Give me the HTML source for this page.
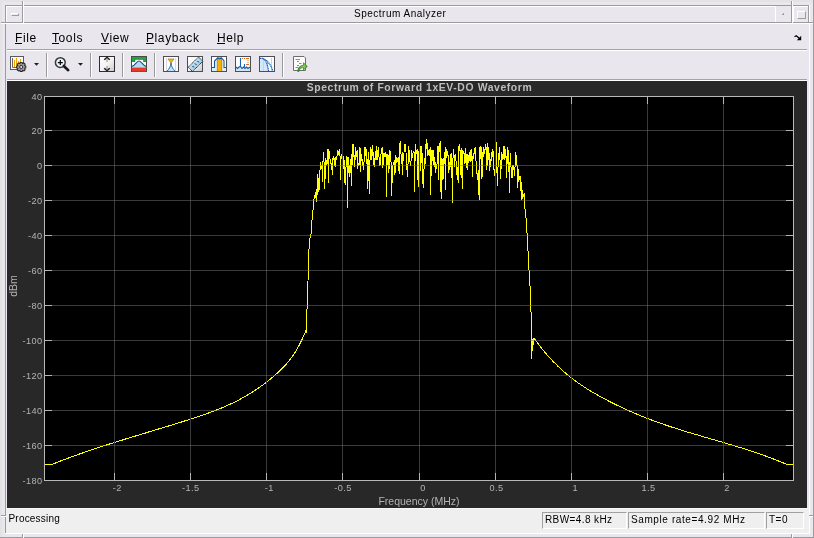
<!DOCTYPE html>
<html><head><meta charset="utf-8"><style>
*{margin:0;padding:0;box-sizing:border-box}
html,body{width:814px;height:538px;overflow:hidden;background:#e8e8e8;font-family:"Liberation Sans",sans-serif}
.a{position:absolute}
svg{will-change:transform}
.g{stroke:#3a3a3a;stroke-width:1}
.gh{stroke:#767676;stroke-opacity:0.5;stroke-width:1}
.t{stroke:#b4b4b4;stroke-width:1}
text{font-family:"Liberation Sans",sans-serif}
.lb{font-size:9.2px;fill:#b4b4b4;letter-spacing:0.4px}
.ttl{font-size:10.4px;font-weight:bold;fill:#bebebe;letter-spacing:0.6px}
.xl{font-size:10.5px;fill:#b4b4b4}
.tt{font-size:10px;fill:#000;letter-spacing:0.5px}
.mn{font-size:12px;fill:#000;letter-spacing:0.6px}
.sb{font-size:10px;fill:#000}
</style></head><body>
<div class="a" style="left:0px;top:0px;width:814px;height:538px;background:#e9e7ed"></div>
<div class="a" style="left:6px;top:6px;width:803px;height:527px;background:#e9e7ed"></div>
<div class="a" style="left:0px;top:0px;width:814px;height:2px;background:#e3e3e3"></div>
<div class="a" style="left:0px;top:0px;width:2px;height:538px;background:#e3e3e3"></div>
<div class="a" style="left:813px;top:0px;width:1px;height:538px;background:#9c9c9c"></div>
<div class="a" style="left:0px;top:537px;width:814px;height:1px;background:#9c9c9c"></div>
<div class="a" style="left:5px;top:5px;width:804px;height:1px;background:#9c9c9c"></div>
<div class="a" style="left:5px;top:5px;width:1px;height:529px;background:#9c9c9c"></div>
<div class="a" style="left:809px;top:5px;width:1px;height:529px;background:#ffffff"></div>
<div class="a" style="left:5px;top:533px;width:805px;height:1px;background:#ffffff"></div>
<div class="a" style="left:6px;top:22px;width:803px;height:1px;background:#9c9c9c"></div>
<div class="a" style="left:6px;top:23px;width:803px;height:1px;background:#ffffff"></div>
<div class="a" style="left:22px;top:1px;width:1px;height:22px;background:#9c9c9c"></div>
<div class="a" style="left:23px;top:1px;width:1px;height:22px;background:#ffffff"></div>
<div class="a" style="left:791px;top:1px;width:1px;height:22px;background:#9c9c9c"></div>
<div class="a" style="left:792px;top:1px;width:1px;height:22px;background:#ffffff"></div>
<div class="a" style="left:6px;top:6px;width:16px;height:1px;background:#ffffff"></div>
<div class="a" style="left:6px;top:6px;width:1px;height:16px;background:#ffffff"></div>
<div class="a" style="left:808px;top:6px;width:1px;height:16px;background:#9c9c9c"></div>
<div class="a" style="left:793px;top:6px;width:15px;height:1px;background:#ffffff"></div>
<div class="a" style="left:793px;top:6px;width:1px;height:16px;background:#ffffff"></div>
<div class="a" style="left:775px;top:6px;width:1px;height:16px;background:#ffffff"></div>
<div class="a" style="left:24px;top:6px;width:751px;height:1px;background:#ffffff"></div>
<div class="a" style="left:1px;top:22px;width:5px;height:1px;background:#9c9c9c"></div>
<div class="a" style="left:1px;top:23px;width:5px;height:1px;background:#ffffff"></div>
<div class="a" style="left:809px;top:22px;width:4px;height:1px;background:#9c9c9c"></div>
<div class="a" style="left:809px;top:23px;width:4px;height:1px;background:#ffffff"></div>
<div class="a" style="left:1px;top:515px;width:5px;height:1px;background:#9c9c9c"></div>
<div class="a" style="left:1px;top:516px;width:5px;height:1px;background:#ffffff"></div>
<div class="a" style="left:809px;top:515px;width:4px;height:1px;background:#9c9c9c"></div>
<div class="a" style="left:809px;top:516px;width:4px;height:1px;background:#ffffff"></div>
<div class="a" style="left:22px;top:534px;width:1px;height:4px;background:#9c9c9c"></div>
<div class="a" style="left:23px;top:534px;width:1px;height:4px;background:#ffffff"></div>
<div class="a" style="left:791px;top:534px;width:1px;height:4px;background:#9c9c9c"></div>
<div class="a" style="left:792px;top:534px;width:1px;height:4px;background:#ffffff"></div>
<div class="a" style="left:11px;top:13px;width:8px;height:3px;border-top:1px solid #fff;border-left:1px solid #fff;border-bottom:1px solid #9c9c9c;border-right:1px solid #9c9c9c"></div>
<div class="a" style="left:797px;top:11px;width:9px;height:8px;border-top:1px solid #fff;border-left:1px solid #fff;border-bottom:1px solid #9c9c9c;border-right:1px solid #9c9c9c"></div>
<div class="a" style="left:782px;top:13px;width:2px;height:2px;border-bottom:1px solid #9c9c9c;border-right:1px solid #9c9c9c"></div>
<div class="a" style="left:7px;top:49px;width:800px;height:1px;background:#a4a4a4"></div>
<div class="a" style="left:7px;top:50px;width:800px;height:1px;background:#ffffff"></div>
<div class="a" style="left:7px;top:79px;width:800px;height:1px;background:#a4a4a4"></div>
<div class="a" style="left:7px;top:80px;width:800px;height:1px;background:#ffffff"></div>
<div class="a" style="left:46px;top:53px;width:1px;height:24px;background:#9a9a9a"></div>
<div class="a" style="left:47px;top:53px;width:1px;height:24px;background:#ffffff"></div>
<div class="a" style="left:90px;top:53px;width:1px;height:24px;background:#9a9a9a"></div>
<div class="a" style="left:91px;top:53px;width:1px;height:24px;background:#ffffff"></div>
<div class="a" style="left:122px;top:53px;width:1px;height:24px;background:#9a9a9a"></div>
<div class="a" style="left:123px;top:53px;width:1px;height:24px;background:#ffffff"></div>
<div class="a" style="left:154px;top:53px;width:1px;height:24px;background:#9a9a9a"></div>
<div class="a" style="left:155px;top:53px;width:1px;height:24px;background:#ffffff"></div>
<div class="a" style="left:282px;top:53px;width:1px;height:24px;background:#9a9a9a"></div>
<div class="a" style="left:283px;top:53px;width:1px;height:24px;background:#ffffff"></div>
<div class="a" style="left:7px;top:81px;width:800px;height:427px;background:#282828"></div>
<div class="a" style="left:6px;top:508px;width:803px;height:25px;background:#efefef"></div>
<div class="a" style="left:6px;top:508px;width:803px;height:1px;background:#f8f8f8"></div>
<div class="a" style="left:542px;top:512px;width:85px;height:17px;border-top:1px solid #a0a0a0;border-left:1px solid #a0a0a0;border-right:1px solid #fff;border-bottom:1px solid #fff"></div>
<div class="a" style="left:628px;top:512px;width:137px;height:17px;border-top:1px solid #a0a0a0;border-left:1px solid #a0a0a0;border-right:1px solid #fff;border-bottom:1px solid #fff"></div>
<div class="a" style="left:766px;top:512px;width:38px;height:17px;border-top:1px solid #a0a0a0;border-left:1px solid #a0a0a0;border-right:1px solid #fff;border-bottom:1px solid #fff"></div>
<svg width="320" height="30" viewBox="0 50 320 30" style="position:absolute;left:0;top:50px">
<defs>
<linearGradient id="gw" x1="0" y1="0" x2="1" y2="1"><stop offset="0" stop-color="#ffffff"/><stop offset="0.5" stop-color="#f4f4f4"/><stop offset="1" stop-color="#c8c8c8"/></linearGradient>
<linearGradient id="gb" x1="0" y1="0" x2="1" y2="1"><stop offset="0" stop-color="#e4f4fc"/><stop offset="1" stop-color="#7ab8e0"/></linearGradient>
<linearGradient id="gg" x1="0" y1="0" x2="1" y2="0"><stop offset="0" stop-color="#2f8f1f"/><stop offset="0.6" stop-color="#9ad860"/><stop offset="1" stop-color="#3c9c28"/></linearGradient>
</defs>
<!-- icon1: chart + gear -->
<rect x="10.5" y="56.5" width="13" height="13" fill="#fafafa" stroke="#5a5a5a"/>
<path d="M12.5 58 V67.5 H22" fill="none" stroke="#6a6a6a"/>
<path d="M14.5 67 V60 M16.5 67 V58 M18.5 67 V61 M20.5 67 V59" stroke="#f5a000" stroke-width="1"/>
<g transform="translate(21.2,67) scale(0.92)">
<path d="M-1,-5 L1,-5 L1.4,-3.7 L3,-4.3 L4.3,-3 L3.7,-1.4 L5,-1 L5,1 L3.7,1.4 L4.3,3 L3,4.3 L1.4,3.7 L1,5 L-1,5 L-1.4,3.7 L-3,4.3 L-4.3,3 L-3.7,1.4 L-5,1 L-5,-1 L-3.7,-1.4 L-4.3,-3 L-3,-4.3 L-1.4,-3.7 Z" fill="#9a9a9a" stroke="#262626" stroke-width="1.1"/>
<circle cx="0" cy="0" r="1.7" fill="#dcdcdc" stroke="#262626" stroke-width="1"/>
</g>
<path d="M34 63 H39 L36.5 65.8 Z" fill="#1e1e1e"/>
<!-- icon2: zoom -->
<circle cx="60.3" cy="62.6" r="4.9" fill="#eef6fa" stroke="#3a3a3a" stroke-width="1.5"/>
<path d="M57.8 62.6 H62.8 M60.3 60.1 V65.1" stroke="#000" stroke-width="1.2"/>
<path d="M63.8 66 L68.2 70.2" stroke="#1a1a1a" stroke-width="2.6" stroke-linecap="round"/>
<path d="M78 63 H83 L80.5 65.8 Z" fill="#1e1e1e"/>
<!-- icon3: autoscale -->
<rect x="99.5" y="56.5" width="15" height="15" fill="url(#gw)" stroke="#2e2e2e"/>
<path d="M104.2 59.8 L107 57.4 L109.8 59.8" fill="none" stroke="#1e1e1e" stroke-width="1.5"/>
<path d="M107 58.5 V62" stroke="#9a9a9a" stroke-width="1.2"/>
<path d="M104.2 68.2 L107 70.6 L109.8 68.2" fill="none" stroke="#1e1e1e" stroke-width="1.5"/>
<path d="M107 66 V69.5" stroke="#9a9a9a" stroke-width="1.2"/>
<!-- icon4: green/red bell -->
<rect x="131.5" y="56.5" width="15" height="15" fill="#fff" stroke="#4a4a4a"/>
<path d="M132 57 H146 V61.8 H143.5 V59.5 H135 V61.8 H132 Z" fill="#22a83a"/><path d="M132 61.5 H135 V59.3 H143.5 V61.5 H146" fill="none" stroke="#17702a" stroke-width="0.6"/>
<path d="M132 66.5 C135 66 136.5 61 139 61 C141.5 61 143 66 146 66.5 V67.5 H132 Z" fill="#b8dcee"/>
<path d="M132 66.3 C135 66 136.5 61 139 61 C141.5 61 143 66 146 66.3" fill="none" stroke="#1a4f96" stroke-width="1.2"/>
<rect x="132" y="67.5" width="14" height="4" fill="#e8392a"/>
<!-- icon5: peak finder -->
<rect x="163.5" y="56.5" width="15" height="15" fill="#fff" stroke="#4e4e4e"/>
<path d="M166.5 58 V71 M175.5 58 V71" stroke="#d8d8d8" stroke-width="1.2"/>
<path d="M167.5 71 C169 69 170.5 67 171 63 C171.5 67 173 69 174.5 71 Z" fill="#c4e2f2"/>
<path d="M167 71.2 C169 69 170.5 67 171 63 C171.5 67 173 69 175 71.2" fill="none" stroke="#2a66a8" stroke-width="1"/>
<path d="M168 59 H174 L171 63 Z" fill="#f2c218" stroke="#a06a20" stroke-width="0.7"/>
<!-- icon6: ruler -->
<rect x="187.5" y="56.5" width="15" height="15" fill="url(#gw)" stroke="#4e4e4e"/>
<path d="M188.2 67.2 L198.5 57 L202.8 61.3 L192.5 71.5 Z" fill="url(#gb)" stroke="#101010" stroke-width="1" stroke-dasharray="1.1 0.7"/>
<path d="M197.5 61 L198.8 62.3 M195 63.5 L196.3 64.8 M192.5 66 L193.8 67.3" stroke="#101010" stroke-width="1"/>
<!-- icon7: channel -->
<rect x="211.5" y="56.5" width="15" height="15" fill="#fff" stroke="#4e4e4e"/>
<path d="M212 67.5 H215 V61 L217 59 H221 L223 61 V67.5 H226 V71 H212 Z" fill="#d8eef8"/>
<rect x="217" y="57" width="5" height="14" fill="#f7b000"/>
<path d="M217.3 57 V71 M221.7 57 V71" stroke="#e06a1a" stroke-width="0.7"/>
<path d="M212 67.5 H214.5 V61 L216.5 59 L218 58.2 L219.5 59 L221 58.2 L222.5 59 L224 61 V67.5 H226" fill="none" stroke="#1a54a0" stroke-width="1.1"/>
<!-- icon8: distortion -->
<rect x="235.5" y="56.5" width="15" height="15" fill="#fff" stroke="#4e4e4e"/>
<path d="M236 67 L237.5 68.5 L239 67 L240.5 66.5 L242 68.5 L243.5 67 L245 68.5 L246.5 67 L248 68.5 L250 67 V71 H236 Z" fill="#cfe6f2"/>
<path d="M236 67 L237.5 68.5 L239 67 L240.5 66.5 L242 68.5 L243.5 67 L245 68.5 L246.5 67 L248 68.5 L250 67" fill="none" stroke="#1a54a0" stroke-width="1.1"/>
<path d="M240.5 66.8 V58 M244.5 67 V64" stroke="#1a60b0" stroke-width="1.1"/>
<path d="M242 58.5 h1 M244 58.5 h1 M246 58.5 h3 M247.5 60.5 h1 M247.5 62.5 h1 M246 64.5 h3" stroke="#d86a2a" stroke-width="1"/>
<!-- icon9: CCDF -->
<rect x="259.5" y="56.5" width="15" height="15" fill="#fff" stroke="#4e4e4e"/>
<path d="M260 58 H262.5 C265 58.5 267.5 63 268.8 71 H260 Z" fill="#d4e8fa"/>
<path d="M263.5 59 V71 M267.5 60 V71 M271.5 58 V71" stroke="#d0d0d0" stroke-width="1"/>
<path d="M260 58.3 H262.5 C265 58.8 267.3 63 268.6 71" fill="none" stroke="#2a5ab0" stroke-width="1.2" stroke-dasharray="1.3 0.5"/>
<path d="M262.8 58.6 C267 60 271 64.5 272.8 71" fill="none" stroke="#1478d0" stroke-width="1.3" stroke-dasharray="1.3 0.5"/>
<!-- icon10: export -->
<path d="M293.5 56.5 H304 L305.5 58 V70.5 H293.5 Z" fill="#fdfdfd" stroke="#6e6e6e"/>
<path d="M295.5 59.5 H300 M297 61.5 H299 M299 63.5 H301.5 M297 65.5 H299 M295.5 67.5 H298" stroke="#8a8a8a" stroke-width="1"/>
<path d="M297.8 71.5 C297.8 67.5 300 65.5 303.5 65.3 V62.8 L307.3 66.4 L303.5 70 V67.5 C301 67.6 299.3 69 299 71.5 Z" fill="url(#gg)" stroke="#2a7a1a" stroke-width="0.7"/>
</svg>

<svg width="814" height="538" viewBox="0 0 814 538" style="position:absolute;left:0;top:0">
<rect x="44" y="96" width="749" height="384" fill="#000"/>
<path d="M44.5,464.5 L45.5,464.5 L46.5,464.5 L47.5,464.5 L48.5,464.5 L49.5,464.5 L50.5,464.5 L51.5,464.5 L52.5,464.2 L53.5,463.8 L54.5,463.4 L55.5,463.0 L56.5,462.6 L57.5,462.2 L58.5,461.8 L59.5,461.4 L60.5,461.0 L61.5,460.7 L62.5,460.3 L63.5,459.9 L64.5,459.5 L65.5,459.1 L66.5,458.8 L67.5,458.4 L68.5,458.0 L69.5,457.6 L70.5,457.3 L71.5,456.9 L72.5,456.5 L73.5,456.2 L74.5,455.8 L75.5,455.5 L76.5,455.1 L77.5,454.7 L78.5,454.4 L79.5,454.0 L80.5,453.7 L81.5,453.3 L82.5,453.0 L83.5,452.6 L84.5,452.3 L85.5,451.9 L86.5,451.6 L87.5,451.3 L88.5,450.9 L89.5,450.6 L90.5,450.2 L91.5,449.9 L92.5,449.6 L93.5,449.2 L94.5,448.9 L95.5,448.6 L96.5,448.2 L97.5,447.9 L98.5,447.6 L99.5,447.2 L100.5,446.9 L101.5,446.6 L102.5,446.3 L103.5,445.9 L104.5,445.6 L105.5,445.3 L106.5,445.0 L107.5,444.7 L108.5,444.3 L109.5,444.0 L110.5,443.7 L111.5,443.4 L112.5,443.1 L113.5,442.8 L114.5,442.4 L115.5,442.1 L116.5,441.8 L117.5,441.5 L118.5,441.2 L119.5,440.9 L120.5,440.6 L121.5,440.3 L122.5,440.0 L123.5,439.6 L124.5,439.3 L125.5,439.0 L126.5,438.7 L127.5,438.4 L128.5,438.1 L129.5,437.8 L130.5,437.5 L131.5,437.2 L132.5,436.9 L133.5,436.6 L134.5,436.3 L135.5,436.0 L136.5,435.7 L137.5,435.4 L138.5,435.1 L139.5,434.8 L140.5,434.5 L141.5,434.2 L142.5,433.9 L143.5,433.6 L144.5,433.3 L145.5,433.0 L146.5,432.7 L147.5,432.3 L148.5,432.0 L149.5,431.7 L150.5,431.4 L151.5,431.1 L152.5,430.8 L153.5,430.5 L154.5,430.2 L155.5,429.9 L156.5,429.6 L157.5,429.3 L158.5,429.0 L159.5,428.7 L160.5,428.4 L161.5,428.1 L162.5,427.8 L163.5,427.5 L164.5,427.2 L165.5,426.9 L166.5,426.6 L167.5,426.3 L168.5,426.0 L169.5,425.7 L170.5,425.4 L171.5,425.1 L172.5,424.8 L173.5,424.4 L174.5,424.1 L175.5,423.8 L176.5,423.5 L177.5,423.2 L178.5,422.9 L179.5,422.6 L180.5,422.3 L181.5,422.0 L182.5,421.6 L183.5,421.3 L184.5,421.0 L185.5,420.7 L186.5,420.4 L187.5,420.1 L188.5,419.7 L189.5,419.4 L190.5,419.1 L191.5,418.8 L192.5,418.4 L193.5,418.1 L194.5,417.8 L195.5,417.5 L196.5,417.1 L197.5,416.8 L198.5,416.5 L199.5,416.1 L200.5,415.8 L201.5,415.5 L202.5,415.1 L203.5,414.8 L204.5,414.4 L205.5,414.1 L206.5,413.7 L207.5,413.4 L208.5,413.0 L209.5,412.6 L210.5,412.3 L211.5,411.9 L212.5,411.5 L213.5,411.2 L214.5,410.8 L215.5,410.4 L216.5,410.0 L217.5,409.6 L218.5,409.2 L219.5,408.8 L220.5,408.4 L221.5,408.0 L222.5,407.6 L223.5,407.1 L224.5,406.7 L225.5,406.3 L226.5,405.8 L227.5,405.4 L228.5,404.9 L229.5,404.5 L230.5,404.0 L231.5,403.6 L232.5,403.1 L233.5,402.6 L234.5,402.1 L235.5,401.6 L236.5,401.1 L237.5,400.6 L238.5,400.1 L239.5,399.6 L240.5,399.0 L241.5,398.5 L242.5,397.9 L243.5,397.4 L244.5,396.8 L245.5,396.2 L246.5,395.7 L247.5,395.1 L248.5,394.5 L249.5,393.9 L250.5,393.3 L251.5,392.6 L252.5,392.0 L253.5,391.4 L254.5,390.7 L255.5,390.1 L256.5,389.4 L257.5,388.7 L258.5,388.0 L259.5,387.3 L260.5,386.6 L261.5,385.9 L262.5,385.2 L263.5,384.4 L264.5,383.7 L265.5,382.9 L266.5,382.1 L267.5,381.4 L268.5,380.6 L269.5,379.8 L270.5,379.0 L271.5,378.1 L272.5,377.3 L273.5,376.4 L274.5,375.6 L275.5,374.7 L276.5,373.8 L277.5,372.9 L278.5,372.0 L279.5,371.1 L280.5,370.1 L281.5,369.1 L282.5,368.2 L283.5,367.1 L284.5,366.1 L285.5,365.0 L286.5,363.9 L287.5,362.7 L288.5,361.5 L289.5,360.3 L290.5,359.0 L291.5,357.6 L292.5,356.2 L293.5,354.7 L294.5,353.2 L295.5,351.6 L296.5,350.0 L297.5,348.2 L298.5,346.4 L299.5,344.6 L300.5,342.6 L301.5,340.6 L302.5,338.4 L303.5,336.2 L304.5,333.9 L305.5,331.5 L306.2,329.3 L306.8,333.4 L307.0,309.4 L307.5,297.1 L308.0,281.4 L308.5,259.5 L309.0,249.3 L309.4,242.2 L309.9,239.2 L310.4,234.1 L310.9,236.6 L311.4,223.8 L311.9,221.4 L312.4,214.4 L312.9,211.6 L313.3,204.8 L313.8,200.6 L314.3,197.9 L314.8,196.1 L315.3,197.0 L315.8,193.1 L316.3,189.5 L316.8,201.9 L317.2,189.9 L317.7,174.3 L318.2,179.8 L318.7,190.2 L319.2,189.2 L319.7,171.1 L320.2,169.0 L320.7,162.5 L321.1,169.3 L321.6,165.6 L322.1,165.7 L322.6,181.5 L323.1,157.3 L323.6,152.2 L324.1,163.6 L324.6,188.6 L325.0,180.5 L325.5,159.3 L326.0,160.1 L326.5,162.9 L327.0,164.4 L327.5,151.1 L328.0,148.7 L328.5,182.8 L328.9,149.2 L329.4,159.2 L329.9,158.0 L330.4,162.0 L330.9,164.0 L331.4,163.7 L331.9,169.2 L332.4,174.5 L332.8,159.4 L333.3,155.6 L333.8,159.9 L334.3,157.6 L334.8,164.6 L335.3,167.2 L335.8,157.0 L336.3,159.7 L336.7,157.1 L337.2,155.2 L337.7,152.1 L338.2,153.4 L338.7,154.1 L339.2,149.4 L339.7,150.6 L340.2,158.8 L340.6,180.3 L341.1,154.4 L341.6,157.1 L342.1,158.5 L342.6,161.9 L343.1,169.0 L343.6,156.5 L344.1,160.3 L344.5,178.1 L345.0,182.6 L345.5,183.5 L346.0,167.5 L346.5,158.8 L347.0,156.1 L347.5,208.1 L348.0,157.0 L348.4,159.2 L348.9,172.5 L349.4,164.9 L349.9,177.4 L350.4,159.3 L350.9,163.0 L351.4,186.1 L351.9,154.4 L352.3,165.0 L352.8,145.0 L353.3,143.6 L353.8,157.1 L354.3,155.3 L354.8,166.8 L355.3,149.6 L355.8,147.3 L356.2,157.1 L356.7,152.1 L357.2,149.8 L357.7,168.5 L358.2,162.9 L358.7,164.6 L359.2,164.1 L359.7,146.7 L360.1,149.0 L360.6,172.1 L361.1,158.8 L361.6,153.7 L362.1,160.5 L362.6,165.1 L363.1,164.9 L363.6,169.8 L364.0,162.1 L364.5,159.9 L365.0,147.4 L365.5,151.1 L366.0,155.8 L366.5,148.9 L367.0,164.4 L367.5,158.9 L367.9,189.0 L368.4,155.3 L368.9,151.7 L369.4,193.5 L369.9,160.3 L370.4,158.0 L370.9,146.8 L371.4,158.5 L371.8,160.2 L372.3,150.9 L372.8,145.5 L373.3,161.8 L373.8,162.7 L374.3,167.0 L374.8,159.6 L375.3,156.8 L375.7,160.4 L376.2,146.1 L376.7,160.1 L377.2,159.0 L377.7,155.4 L378.2,147.2 L378.7,150.6 L379.2,160.7 L379.6,166.0 L380.1,164.2 L380.6,162.3 L381.1,152.5 L381.6,152.9 L382.1,147.0 L382.6,167.6 L383.1,159.1 L383.5,165.2 L384.0,152.8 L384.5,156.1 L385.0,155.5 L385.5,156.0 L386.0,152.0 L386.5,196.6 L387.0,159.9 L387.4,164.8 L387.9,154.4 L388.4,157.1 L388.9,173.2 L389.4,157.5 L389.9,149.7 L390.4,157.1 L390.9,157.8 L391.3,172.5 L391.8,195.7 L392.3,165.5 L392.8,165.0 L393.3,164.7 L393.8,163.3 L394.3,159.9 L394.8,175.3 L395.2,171.1 L395.7,155.0 L396.2,158.2 L396.7,163.1 L397.2,161.8 L397.7,158.1 L398.2,161.8 L398.7,157.0 L399.1,174.1 L399.6,150.6 L400.1,141.2 L400.6,143.3 L401.1,156.8 L401.6,163.7 L402.1,152.1 L402.6,175.3 L403.0,159.4 L403.5,160.0 L404.0,153.0 L404.5,144.2 L405.0,144.1 L405.5,149.3 L406.0,152.1 L406.5,170.0 L406.9,165.0 L407.4,176.7 L407.9,168.9 L408.4,149.8 L408.9,146.4 L409.4,162.2 L409.9,161.0 L410.4,165.4 L410.8,164.3 L411.3,156.4 L411.8,150.0 L412.3,158.1 L412.8,154.0 L413.3,152.1 L413.8,153.0 L414.3,152.7 L414.7,191.7 L415.2,144.4 L415.7,148.6 L416.2,154.0 L416.7,152.0 L417.2,148.6 L417.7,167.5 L418.2,187.0 L418.6,152.9 L419.1,150.4 L419.6,165.8 L420.1,171.2 L420.6,147.9 L421.1,146.1 L421.6,149.4 L422.1,166.6 L422.5,153.5 L423.0,183.7 L423.5,188.2 L424.0,169.1 L424.5,157.8 L425.0,165.2 L425.5,144.2 L426.0,149.0 L426.4,141.9 L426.9,138.7 L427.4,155.5 L427.9,152.3 L428.4,150.5 L428.9,154.4 L429.4,155.8 L429.9,149.9 L430.3,147.3 L430.8,195.4 L431.3,149.7 L431.8,150.8 L432.3,150.7 L432.8,157.7 L433.3,165.1 L433.8,150.4 L434.2,163.4 L434.7,157.5 L435.2,172.9 L435.7,162.5 L436.2,167.3 L436.7,168.7 L437.2,160.6 L437.7,148.6 L438.1,145.8 L438.6,179.7 L439.1,146.1 L439.6,143.5 L440.1,142.6 L440.6,159.2 L441.1,199.2 L441.6,158.3 L442.0,158.4 L442.5,166.5 L443.0,179.8 L443.5,158.0 L444.0,163.9 L444.5,163.4 L445.0,152.0 L445.5,190.4 L445.9,147.3 L446.4,154.6 L446.9,157.7 L447.4,150.8 L447.9,154.3 L448.4,156.3 L448.9,172.5 L449.4,162.3 L449.8,167.7 L450.3,164.9 L450.8,155.6 L451.3,152.8 L451.8,159.8 L452.3,203.1 L452.8,161.0 L453.3,153.2 L453.7,149.1 L454.2,158.5 L454.7,167.2 L455.2,155.0 L455.7,153.7 L456.2,164.4 L456.7,166.8 L457.2,180.1 L457.6,166.6 L458.1,182.8 L458.6,154.6 L459.1,144.0 L459.6,150.9 L460.1,150.8 L460.6,160.2 L461.1,177.7 L461.5,157.3 L462.0,148.3 L462.5,188.7 L463.0,150.7 L463.5,153.9 L464.0,153.7 L464.5,153.9 L465.0,164.2 L465.4,147.6 L465.9,150.5 L466.4,168.1 L466.9,160.9 L467.4,169.7 L467.9,154.1 L468.4,157.4 L468.9,163.2 L469.3,156.1 L469.8,153.7 L470.3,149.6 L470.8,161.7 L471.3,151.2 L471.8,148.8 L472.3,177.3 L472.8,158.7 L473.2,153.0 L473.7,158.6 L474.2,151.7 L474.7,149.6 L475.2,147.5 L475.7,153.6 L476.2,164.5 L476.7,166.7 L477.1,176.7 L477.6,173.0 L478.1,181.9 L478.6,170.0 L479.1,200.1 L479.6,151.5 L480.1,146.5 L480.6,159.1 L481.0,146.8 L481.5,155.4 L482.0,178.7 L482.5,151.6 L483.0,157.8 L483.5,147.7 L484.0,148.7 L484.5,154.1 L484.9,151.9 L485.4,144.9 L485.9,144.0 L486.4,155.1 L486.9,169.9 L487.4,156.0 L487.9,142.7 L488.4,160.0 L488.8,156.2 L489.3,153.2 L489.8,170.6 L490.3,162.8 L490.8,158.8 L491.3,160.9 L491.8,152.0 L492.3,157.3 L492.7,148.7 L493.2,152.8 L493.7,160.3 L494.2,176.2 L494.7,170.4 L495.2,168.4 L495.7,160.5 L496.2,142.3 L496.6,148.9 L497.1,178.4 L497.6,185.6 L498.1,163.4 L498.6,157.9 L499.1,152.1 L499.6,147.3 L500.1,163.3 L500.5,179.3 L501.0,169.8 L501.5,152.3 L502.0,160.2 L502.5,154.2 L503.0,158.6 L503.5,156.2 L504.0,145.7 L504.4,149.9 L504.9,160.1 L505.4,151.8 L505.9,149.0 L506.4,177.5 L506.9,162.3 L507.4,164.2 L507.9,147.2 L508.3,156.1 L508.8,156.1 L509.3,193.0 L509.8,168.5 L510.3,153.1 L510.8,158.8 L511.3,178.0 L511.8,169.9 L512.2,165.3 L512.7,178.3 L513.2,166.0 L513.7,164.7 L514.2,171.9 L514.7,175.6 L515.2,162.0 L515.7,151.8 L516.1,156.0 L516.6,165.0 L517.1,165.4 L517.6,188.1 L518.1,180.8 L518.6,169.5 L519.1,180.3 L519.6,177.1 L520.0,177.3 L520.5,175.8 L521.0,190.6 L521.5,182.1 L522.0,199.5 L522.5,189.6 L523.0,195.8 L523.5,196.1 L523.9,194.2 L524.4,192.9 L524.9,208.8 L525.4,210.0 L525.9,215.4 L526.4,226.9 L526.9,231.0 L527.4,240.9 L527.8,247.1 L528.3,257.4 L528.8,263.9 L529.3,278.3 L529.8,282.7 L530.3,290.8 L530.8,305.9 L531.3,320.9 L531.5,359.4 L532.3,338.6 L532.3,350.7 L534.0,338.2 L535.0,339.6 L536.0,340.9 L537.0,342.3 L538.0,343.6 L539.0,344.9 L540.0,346.2 L541.0,347.5 L542.0,348.7 L543.0,350.0 L544.0,351.2 L545.0,352.4 L546.0,353.6 L547.0,354.7 L548.0,355.9 L549.0,357.0 L550.0,358.1 L551.0,359.2 L552.0,360.2 L553.0,361.3 L554.0,362.3 L555.0,363.3 L556.0,364.3 L557.0,365.3 L558.0,366.3 L559.0,367.2 L560.0,368.2 L561.0,369.1 L562.0,370.0 L563.0,370.9 L564.0,371.8 L565.0,372.7 L566.0,373.5 L567.0,374.4 L568.0,375.2 L569.0,376.0 L570.0,376.8 L571.0,377.6 L572.0,378.4 L573.0,379.2 L574.0,379.9 L575.0,380.7 L576.0,381.4 L577.0,382.1 L578.0,382.8 L579.0,383.5 L580.0,384.2 L581.0,384.9 L582.0,385.6 L583.0,386.2 L584.0,386.9 L585.0,387.5 L586.0,388.2 L587.0,388.8 L588.0,389.4 L589.0,390.1 L590.0,390.7 L591.0,391.3 L592.0,391.9 L593.0,392.5 L594.0,393.0 L595.0,393.6 L596.0,394.2 L597.0,394.7 L598.0,395.3 L599.0,395.9 L600.0,396.4 L601.0,397.0 L602.0,397.5 L603.0,398.0 L604.0,398.6 L605.0,399.1 L606.0,399.6 L607.0,400.1 L608.0,400.7 L609.0,401.2 L610.0,401.7 L611.0,402.2 L612.0,402.7 L613.0,403.2 L614.0,403.7 L615.0,404.2 L616.0,404.7 L617.0,405.2 L618.0,405.7 L619.0,406.1 L620.0,406.6 L621.0,407.1 L622.0,407.6 L623.0,408.0 L624.0,408.5 L625.0,409.0 L626.0,409.4 L627.0,409.9 L628.0,410.3 L629.0,410.8 L630.0,411.2 L631.0,411.7 L632.0,412.1 L633.0,412.5 L634.0,413.0 L635.0,413.4 L636.0,413.8 L637.0,414.2 L638.0,414.7 L639.0,415.1 L640.0,415.5 L641.0,415.9 L642.0,416.3 L643.0,416.7 L644.0,417.1 L645.0,417.5 L646.0,417.9 L647.0,418.3 L648.0,418.7 L649.0,419.1 L650.0,419.4 L651.0,419.8 L652.0,420.2 L653.0,420.6 L654.0,420.9 L655.0,421.3 L656.0,421.7 L657.0,422.0 L658.0,422.4 L659.0,422.7 L660.0,423.1 L661.0,423.4 L662.0,423.8 L663.0,424.1 L664.0,424.5 L665.0,424.8 L666.0,425.2 L667.0,425.5 L668.0,425.8 L669.0,426.2 L670.0,426.5 L671.0,426.8 L672.0,427.2 L673.0,427.5 L674.0,427.8 L675.0,428.1 L676.0,428.4 L677.0,428.8 L678.0,429.1 L679.0,429.4 L680.0,429.7 L681.0,430.0 L682.0,430.3 L683.0,430.6 L684.0,430.9 L685.0,431.2 L686.0,431.6 L687.0,431.9 L688.0,432.2 L689.0,432.5 L690.0,432.8 L691.0,433.1 L692.0,433.4 L693.0,433.7 L694.0,433.9 L695.0,434.2 L696.0,434.5 L697.0,434.8 L698.0,435.1 L699.0,435.4 L700.0,435.7 L701.0,436.0 L702.0,436.3 L703.0,436.6 L704.0,436.9 L705.0,437.2 L706.0,437.5 L707.0,437.7 L708.0,438.0 L709.0,438.3 L710.0,438.6 L711.0,438.9 L712.0,439.2 L713.0,439.5 L714.0,439.8 L715.0,440.1 L716.0,440.3 L717.0,440.6 L718.0,440.9 L719.0,441.2 L720.0,441.5 L721.0,441.8 L722.0,442.1 L723.0,442.4 L724.0,442.7 L725.0,443.0 L726.0,443.3 L727.0,443.6 L728.0,443.9 L729.0,444.2 L730.0,444.5 L731.0,444.8 L732.0,445.1 L733.0,445.4 L734.0,445.7 L735.0,446.0 L736.0,446.3 L737.0,446.6 L738.0,446.9 L739.0,447.2 L740.0,447.5 L741.0,447.8 L742.0,448.1 L743.0,448.4 L744.0,448.8 L745.0,449.1 L746.0,449.4 L747.0,449.7 L748.0,450.0 L749.0,450.4 L750.0,450.7 L751.0,451.0 L752.0,451.3 L753.0,451.7 L754.0,452.0 L755.0,452.3 L756.0,452.7 L757.0,453.0 L758.0,453.4 L759.0,453.7 L760.0,454.1 L761.0,454.4 L762.0,454.8 L763.0,455.1 L764.0,455.5 L765.0,455.8 L766.0,456.2 L767.0,456.6 L768.0,456.9 L769.0,457.3 L770.0,457.7 L771.0,458.1 L772.0,458.4 L773.0,458.8 L774.0,459.2 L775.0,459.6 L776.0,460.0 L777.0,460.4 L778.0,460.8 L779.0,461.2 L780.0,461.6 L781.0,462.0 L782.0,462.4 L783.0,462.8 L784.0,463.3 L785.0,463.7 L786.0,464.1 L787.0,464.5 L788.0,464.5 L789.0,464.5 L790.0,464.5 L791.0,464.5 L792.0,464.5 L793.0,464.5" fill="none" stroke="#ffff00" stroke-width="1" shape-rendering="crispEdges"/>
<line x1="114.5" y1="96" x2="114.5" y2="480" class="g"/>
<line x1="190.5" y1="96" x2="190.5" y2="480" class="g"/>
<line x1="266.5" y1="96" x2="266.5" y2="480" class="g"/>
<line x1="342.5" y1="96" x2="342.5" y2="480" class="g"/>
<line x1="419.5" y1="96" x2="419.5" y2="480" class="g"/>
<line x1="495.5" y1="96" x2="495.5" y2="480" class="g"/>
<line x1="571.5" y1="96" x2="571.5" y2="480" class="g"/>
<line x1="647.5" y1="96" x2="647.5" y2="480" class="g"/>
<line x1="723.5" y1="96" x2="723.5" y2="480" class="g"/>
<line x1="44" y1="130.5" x2="793" y2="130.5" class="gh"/>
<line x1="44" y1="165.5" x2="793" y2="165.5" class="gh"/>
<line x1="44" y1="200.5" x2="793" y2="200.5" class="gh"/>
<line x1="44" y1="235.5" x2="793" y2="235.5" class="gh"/>
<line x1="44" y1="270.5" x2="793" y2="270.5" class="gh"/>
<line x1="44" y1="305.5" x2="793" y2="305.5" class="gh"/>
<line x1="44" y1="340.5" x2="793" y2="340.5" class="gh"/>
<line x1="44" y1="375.5" x2="793" y2="375.5" class="gh"/>
<line x1="44" y1="410.5" x2="793" y2="410.5" class="gh"/>
<line x1="44" y1="445.5" x2="793" y2="445.5" class="gh"/>
<line x1="114.5" y1="480" x2="114.5" y2="473" class="t"/>
<line x1="114.5" y1="96" x2="114.5" y2="104" class="t"/>
<line x1="190.5" y1="480" x2="190.5" y2="473" class="t"/>
<line x1="190.5" y1="96" x2="190.5" y2="104" class="t"/>
<line x1="266.5" y1="480" x2="266.5" y2="473" class="t"/>
<line x1="266.5" y1="96" x2="266.5" y2="104" class="t"/>
<line x1="342.5" y1="480" x2="342.5" y2="473" class="t"/>
<line x1="342.5" y1="96" x2="342.5" y2="104" class="t"/>
<line x1="419.5" y1="480" x2="419.5" y2="473" class="t"/>
<line x1="419.5" y1="96" x2="419.5" y2="104" class="t"/>
<line x1="495.5" y1="480" x2="495.5" y2="473" class="t"/>
<line x1="495.5" y1="96" x2="495.5" y2="104" class="t"/>
<line x1="571.5" y1="480" x2="571.5" y2="473" class="t"/>
<line x1="571.5" y1="96" x2="571.5" y2="104" class="t"/>
<line x1="647.5" y1="480" x2="647.5" y2="473" class="t"/>
<line x1="647.5" y1="96" x2="647.5" y2="104" class="t"/>
<line x1="723.5" y1="480" x2="723.5" y2="473" class="t"/>
<line x1="723.5" y1="96" x2="723.5" y2="104" class="t"/>
<line x1="44" y1="130.5" x2="52" y2="130.5" class="t"/>
<line x1="793" y1="130.5" x2="786" y2="130.5" class="t"/>
<line x1="44" y1="165.5" x2="52" y2="165.5" class="t"/>
<line x1="793" y1="165.5" x2="786" y2="165.5" class="t"/>
<line x1="44" y1="200.5" x2="52" y2="200.5" class="t"/>
<line x1="793" y1="200.5" x2="786" y2="200.5" class="t"/>
<line x1="44" y1="235.5" x2="52" y2="235.5" class="t"/>
<line x1="793" y1="235.5" x2="786" y2="235.5" class="t"/>
<line x1="44" y1="270.5" x2="52" y2="270.5" class="t"/>
<line x1="793" y1="270.5" x2="786" y2="270.5" class="t"/>
<line x1="44" y1="305.5" x2="52" y2="305.5" class="t"/>
<line x1="793" y1="305.5" x2="786" y2="305.5" class="t"/>
<line x1="44" y1="340.5" x2="52" y2="340.5" class="t"/>
<line x1="793" y1="340.5" x2="786" y2="340.5" class="t"/>
<line x1="44" y1="375.5" x2="52" y2="375.5" class="t"/>
<line x1="793" y1="375.5" x2="786" y2="375.5" class="t"/>
<line x1="44" y1="410.5" x2="52" y2="410.5" class="t"/>
<line x1="793" y1="410.5" x2="786" y2="410.5" class="t"/>
<line x1="44" y1="445.5" x2="52" y2="445.5" class="t"/>
<line x1="793" y1="445.5" x2="786" y2="445.5" class="t"/>
<rect x="44.5" y="96.5" width="749" height="384" fill="none" stroke="#b9b9b9" stroke-width="1"/>
<text x="117.2" y="491" text-anchor="middle" class="lb">-2</text>
<text x="190.79999999999998" y="491" text-anchor="middle" class="lb">-1.5</text>
<text x="269.2" y="491" text-anchor="middle" class="lb">-1</text>
<text x="343.0" y="491" text-anchor="middle" class="lb">-0.5</text>
<text x="423.0" y="491" text-anchor="middle" class="lb">0</text>
<text x="496.5" y="491" text-anchor="middle" class="lb">0.5</text>
<text x="575.2" y="491" text-anchor="middle" class="lb">1</text>
<text x="648.5" y="491" text-anchor="middle" class="lb">1.5</text>
<text x="726.9000000000001" y="491" text-anchor="middle" class="lb">2</text>
<text x="42.6" y="100.0" text-anchor="end" class="lb">40</text>
<text x="42.6" y="134.0" text-anchor="end" class="lb">20</text>
<text x="42.6" y="169.0" text-anchor="end" class="lb">0</text>
<text x="42.6" y="204.0" text-anchor="end" class="lb">-20</text>
<text x="42.6" y="239.0" text-anchor="end" class="lb">-40</text>
<text x="42.6" y="274.0" text-anchor="end" class="lb">-60</text>
<text x="42.6" y="309.0" text-anchor="end" class="lb">-80</text>
<text x="42.6" y="344.0" text-anchor="end" class="lb">-100</text>
<text x="42.6" y="379.0" text-anchor="end" class="lb">-120</text>
<text x="42.6" y="414.0" text-anchor="end" class="lb">-140</text>
<text x="42.6" y="449.0" text-anchor="end" class="lb">-160</text>
<text x="42.6" y="484.0" text-anchor="end" class="lb">-180</text>
<text x="419.5" y="91" text-anchor="middle" class="ttl">Spectrum of Forward 1xEV-DO Waveform</text>
<text x="419" y="505" text-anchor="middle" class="xl">Frequency (MHz)</text>
<text transform="translate(17,286) rotate(-90)" text-anchor="middle" class="xl">dBm</text>
</svg>
<svg width="814" height="538" viewBox="0 0 814 538" style="position:absolute;left:0;top:0">
<text x="354" y="16.5" class="tt">Spectrum Analyzer</text>
<text x="15" y="41.5" class="mn">File</text><rect x="15" y="43" width="7" height="1" fill="#000"/>
<text x="52" y="41.5" class="mn">Tools</text><rect x="52" y="43" width="7" height="1" fill="#000"/>
<text x="101" y="41.5" class="mn">View</text><rect x="101" y="43" width="8" height="1" fill="#000"/>
<text x="146" y="41.5" class="mn">Playback</text><rect x="146" y="43" width="8" height="1" fill="#000"/>
<text x="217" y="41.5" class="mn">Help</text><rect x="217" y="43" width="8" height="1" fill="#000"/>
<text x="8.5" y="521.8" class="sb" style="letter-spacing:0.2px">Processing</text>
<text x="545" y="522.8" class="sb" style="letter-spacing:0.4px">RBW=4.8 kHz</text>
<text x="631" y="523" class="sb" style="letter-spacing:0.6px">Sample rate=4.92 MHz</text>
<text x="769" y="522.6" class="sb" style="letter-spacing:0.5px">T=0</text>
<path d="M794.5 36.8 L796.3 35.8 L799.5 38.6" fill="none" stroke="#000" stroke-width="1.3"/><path d="M801.2 35.8 L801.2 40.2 L796.8 40.2 Z" fill="#000"/>
</svg>
</body></html>
